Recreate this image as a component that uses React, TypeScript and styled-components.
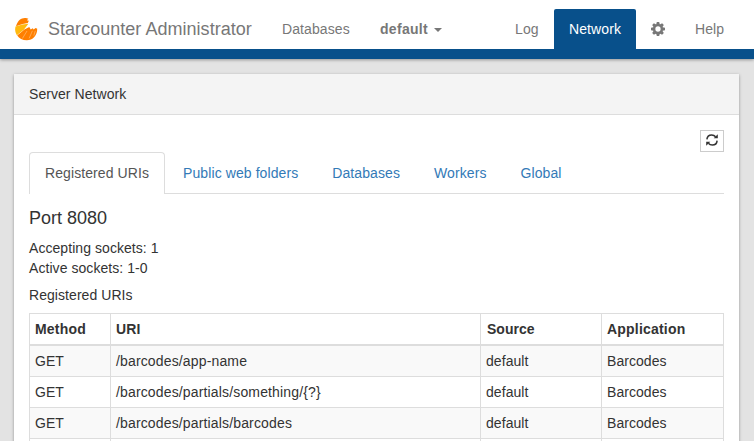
import React from "react";
import styled, { createGlobalStyle, css } from "styled-components";

const GlobalStyle = createGlobalStyle`
  *, *::before, *::after { box-sizing: border-box; }
  html, body { margin: 0; padding: 0; }
  body {
    height: 100vh;
    overflow: hidden;
    background: #e3e3e3;
    color: #333;
    font: 14px/20px "Liberation Sans", Arial, Helvetica, sans-serif;
    letter-spacing: 0.06px;
  }
`;

const Page = styled.div`
  height: 441px;
  overflow: hidden;
`;

const Navbar = styled.header`
  display: flex;
  align-items: flex-end;
  height: 59px;
  padding: 0 15px;
  background: #fff;
  border-bottom: 10px solid #08508b;
  box-shadow: 0 1px 3px rgba(0, 0, 0, 0.35);
`;

const Brand = styled.a`
  display: flex;
  align-items: center;
  gap: 10px;
  width: 252px;
  height: 40px;
  color: #777;
  font-size: 18px;
  letter-spacing: 0.03px;
  white-space: nowrap;
`;

const NavGroup = styled.nav<{ $right?: boolean }>`
  display: flex;
  ${(p) => p.$right && css`margin-left: auto;`}
`;

const NavItem = styled.a<{ $active?: boolean; $bold?: boolean; $width?: number }>`
  display: flex;
  align-items: center;
  width: ${(p) => (p.$width ? `${p.$width}px` : "auto")};
  height: 40px;
  padding: 0 15px;
  color: ${(p) => (p.$active ? "#fff" : "#777")};
  background: ${(p) => (p.$active ? "#08508b" : "transparent")};
  border-radius: 2px 2px 0 0;
  font-weight: ${(p) => (p.$bold ? 700 : 400)};
  letter-spacing: ${(p) => (p.$bold ? "0.3px" : "0.1px")};
  white-space: nowrap;
`;

const Caret = styled.span`
  margin: 2px 0 0 6px;
  border-top: 4px solid currentColor;
  border-left: 4px solid transparent;
  border-right: 4px solid transparent;
`;

const Panel = styled.main`
  height: 400px;
  margin: 15px 15px 0 14px;
  background: #fff;
  box-shadow: 0 1px 3px rgba(0, 0, 0, 0.35);
`;

const PanelHeading = styled.div`
  height: 41px;
  padding: 10px 15px;
  background: #f4f4f4;
  border-bottom: 1px solid #ddd;
`;

const PanelBody = styled.div`
  padding: 15px 15px 0;
`;

const Toolbar = styled.div`
  display: flex;
  justify-content: flex-end;
`;

const RefreshButton = styled.button`
  display: flex;
  align-items: center;
  justify-content: center;
  width: 24px;
  height: 22px;
  padding: 0 0 2px;
  color: #333;
  background: #fff;
  border: 1px solid #ccc;
`;

const Tabs = styled.div`
  display: flex;
  height: 42px;
  border-bottom: 1px solid #ddd;
`;

const Tab = styled.a<{ $active?: boolean }>`
  height: 42px;
  margin-right: 2px;
  padding: 10px 15px;
  color: ${(p) => (p.$active ? "#555" : "#337ab7")};
  background: ${(p) => (p.$active ? "#fff" : "transparent")};
  border: 1px solid ${(p) => (p.$active ? "#ddd" : "transparent")};
  border-bottom: 0;
  border-radius: 4px 4px 0 0;
  letter-spacing: 0.09px;
  white-space: nowrap;
`;

const PortTitle = styled.h4`
  margin: 14px 0 10px;
  font-size: 18px;
  line-height: 20px;
  font-weight: 400;
  letter-spacing: 0;
`;

const SocketInfo = styled.div``;

const TableCaption = styled.div`
  margin: 7px 0 8px;
`;

const UriTable = styled.table`
  width: 695px;
  table-layout: fixed;
  border-collapse: separate;
  border-spacing: 0;
  border: solid #ddd;
  border-width: 1px 0 0 1px;
`;

const Column = styled.col<{ $width: number }>`
  width: ${(p) => p.$width}px;
`;

const HeaderCell = styled.th`
  height: 32px;
  padding: 5px;
  border: solid #ddd;
  border-width: 0 1px 2px 0;
  text-align: left;
  letter-spacing: 0.2px;

  &:nth-child(3) { padding-left: 6px; letter-spacing: 0; }
`;

const Row = styled.tr`
  &:nth-child(odd) { background: #f9f9f9; }
`;

const Cell = styled.td`
  height: 31px;
  padding: 5px;
  border: solid #ddd;
  border-width: 0 1px 1px 0;

  &:nth-child(2) { letter-spacing: 0.15px; }
`;

const Logo = () => (
  <svg width="23" height="23" viewBox="0 0 23 23">
    <path d="M1.6 6.6C3 2.8 6 .2 9.8.1c1.4 0 2.8.2 3.6.7L11.8 2.2 13.8 2.8 12.8 5 7.6 6.1 1 8.2Z" fill="#ff7f00" />
    <path d="M.5 8.6 7.5 6.6 13.4 5.8 9 11.4 1.9 17.2C.2 14.8-.2 12 .5 8.6Z" fill="#ffb90f" />
    <path d="M2.2 17.5 9.4 11.6 14.3 9 15.7 11.4 17.8 10.3 18.6 11.6 20.6 10 22.2 10.8C22.4 17.5 17.8 22.3 11.8 22.3 7.5 22.3 4.2 20.7 2.2 17.5Z" fill="#ff7f00" />
    <path d="M7.4 20.5 12 13M14.2 20.3 17.4 12.8M18.8 17.6 20.3 12.8" stroke="#ffdcb0" strokeWidth=".45" />
  </svg>
);

const teeth = [0, 45, 90, 135, 180, 225, 270, 315];

const Gear = () => (
  <svg width="14" height="14" viewBox="0 0 14 14" fill="currentColor">
    {teeth.map((angle) => (
      <path key={angle} d="M5.8 0h2.4l.6 2.5H5.2Z" transform={`rotate(${angle} 7 7)`} />
    ))}
    <circle cx="7" cy="7" r="3.9" fill="none" stroke="currentColor" strokeWidth="2.5" />
  </svg>
);

const Refresh = () => (
  <svg width="12" height="12" viewBox="0 0 12 12">
    <g fill="none" stroke="currentColor" strokeWidth="1.5">
      <path d="M.9 5.4C1.1 2.7 3 .9 5.7.9c1.7 0 2.9.6 3.9 1.8" />
      <path d="M11.1 6.6c-.2 2.7-2.1 4.5-4.8 4.5-1.7 0-2.9-.6-3.9-1.8" />
    </g>
    <path d="M11.8.3v4H7.7ZM.2 11.7v-4h4.1Z" fill="currentColor" />
  </svg>
);

const routes = [
  "/barcodes/app-name",
  "/barcodes/partials/something/{?}",
  "/barcodes/partials/barcodes",
  "",
];

export default function App() {
  return (
    <>
      <GlobalStyle />
      <Page>
        <Navbar>
          <Brand><Logo />Starcounter Administrator</Brand>
          <NavGroup>
            <NavItem $width={98}>Databases</NavItem>
            <NavItem $bold>default<Caret /></NavItem>
          </NavGroup>
          <NavGroup $right>
            <NavItem $width={54}>Log</NavItem>
            <NavItem $width={82} $active>Network</NavItem>
            <NavItem $width={44}><Gear /></NavItem>
            <NavItem $width={59}>Help</NavItem>
          </NavGroup>
        </Navbar>
        <Panel>
          <PanelHeading>Server Network</PanelHeading>
          <PanelBody>
            <Toolbar>
              <RefreshButton aria-label="Refresh"><Refresh /></RefreshButton>
            </Toolbar>
            <Tabs>
              <Tab $active>Registered URIs</Tab>
              <Tab>Public web folders</Tab>
              <Tab>Databases</Tab>
              <Tab>Workers</Tab>
              <Tab>Global</Tab>
            </Tabs>
            <PortTitle>Port 8080</PortTitle>
            <SocketInfo>Accepting sockets: 1</SocketInfo>
            <SocketInfo>Active sockets: 1-0</SocketInfo>
            <TableCaption>Registered URIs</TableCaption>
            <UriTable>
              <colgroup>
                <Column $width={81} />
                <Column $width={370} />
                <Column $width={121} />
                <Column $width={122} />
              </colgroup>
              <thead>
                <tr>
                  <HeaderCell>Method</HeaderCell>
                  <HeaderCell>URI</HeaderCell>
                  <HeaderCell>Source</HeaderCell>
                  <HeaderCell>Application</HeaderCell>
                </tr>
              </thead>
              <tbody>
                {routes.map((uri) => (
                  <Row key={uri}>
                    <Cell>{uri && "GET"}</Cell>
                    <Cell>{uri}</Cell>
                    <Cell>{uri && "default"}</Cell>
                    <Cell>{uri && "Barcodes"}</Cell>
                  </Row>
                ))}
              </tbody>
            </UriTable>
          </PanelBody>
        </Panel>
      </Page>
    </>
  );
}
